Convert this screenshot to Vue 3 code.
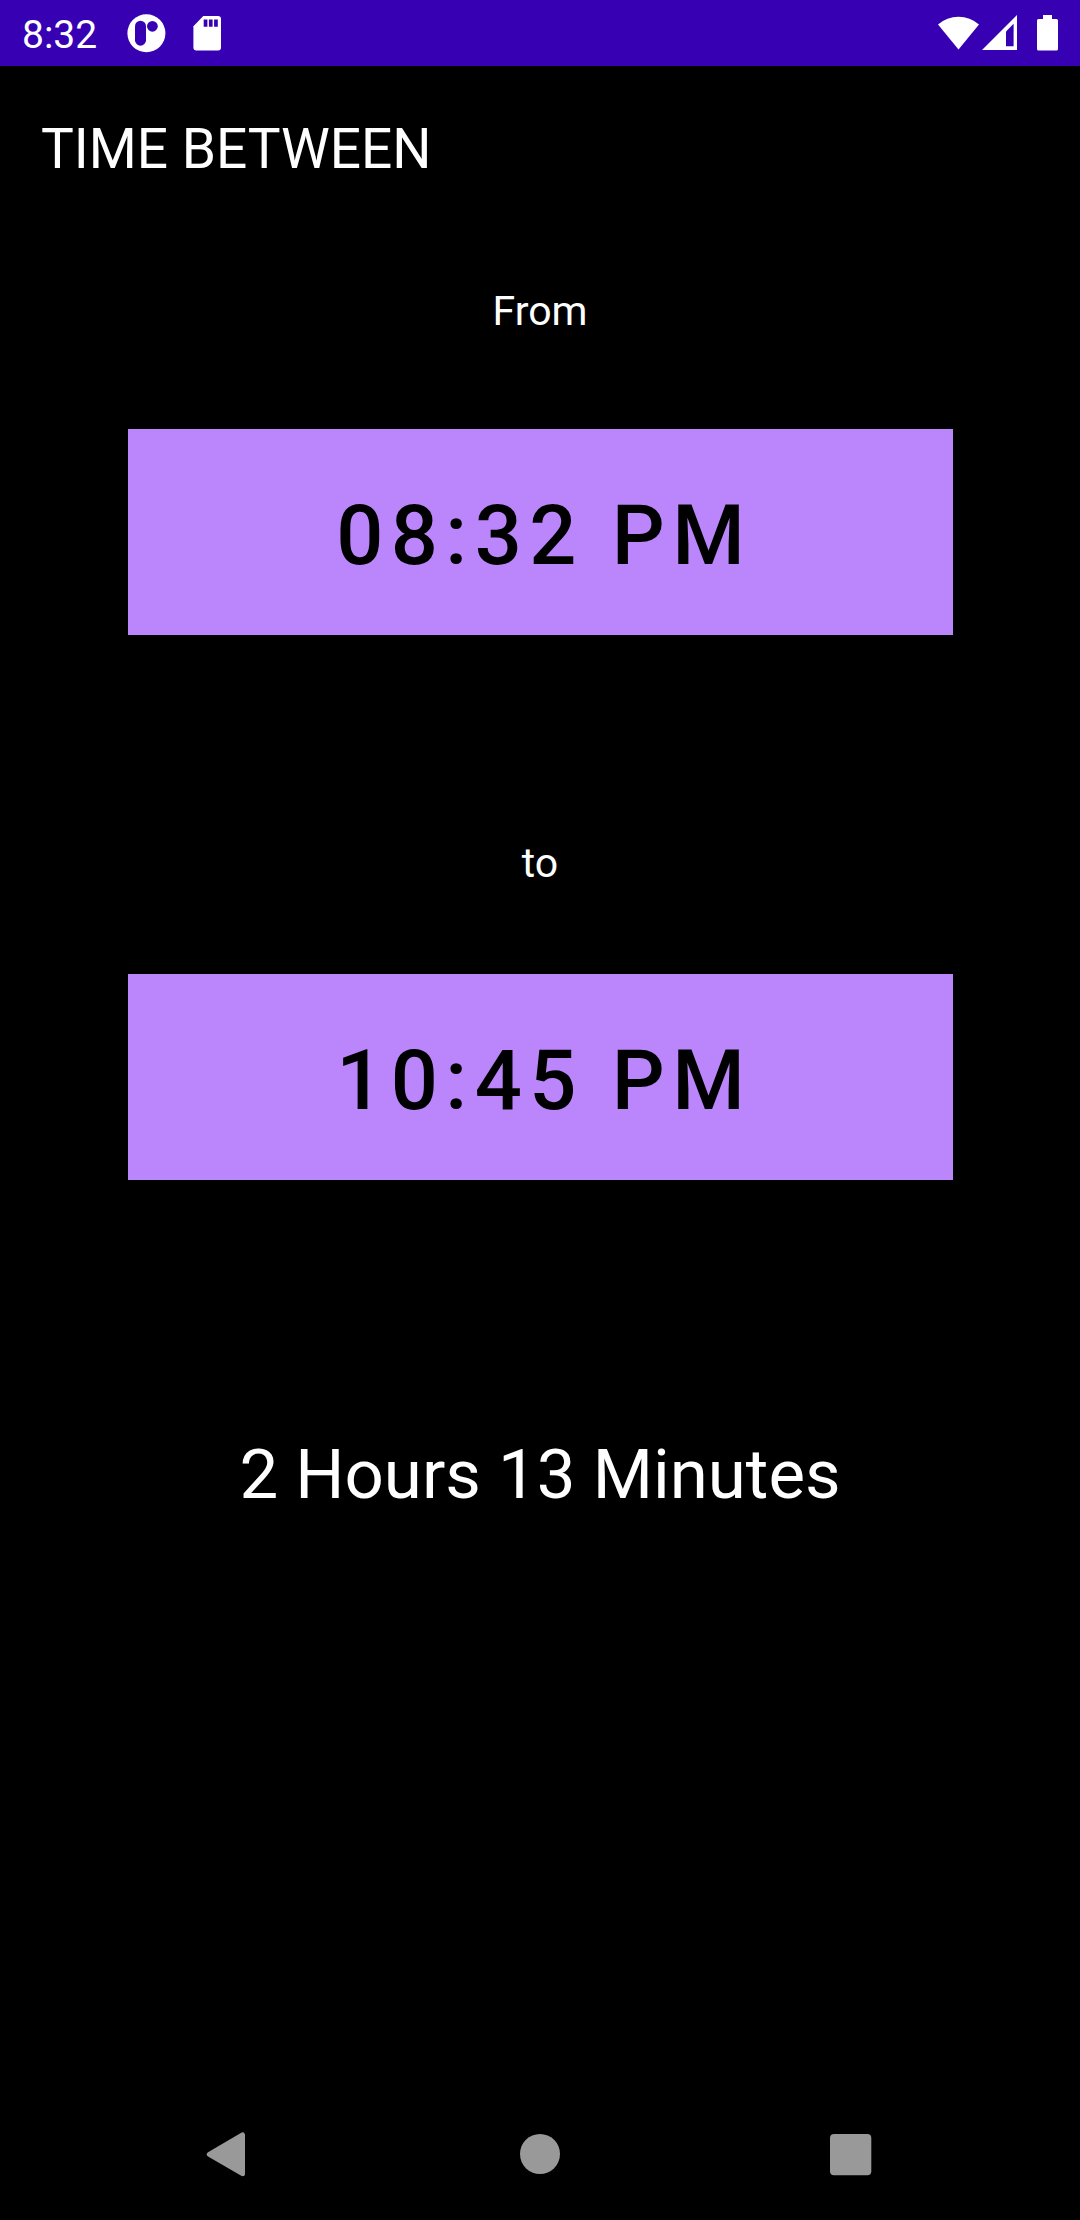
<script setup>
const pickers = [
  { label: 'From', time: '08:32 PM', cls: 'from' },
  { label: 'to', time: '10:45 PM', cls: 'to' },
]
</script>

<template>
  <div class="screen">
    <header class="status">
      <span class="clock">8:32</span>
      <svg width="50" height="66" viewBox="120 0 50 66">
        <circle cx="146.4" cy="33.2" r="19" fill="#fff" />
        <rect x="135" y="20.7" width="11" height="25" rx="5.5" fill="#3700b3" />
        <circle cx="152.4" cy="26.3" r="5.4" fill="#3700b3" />
      </svg>
      <svg width="60" height="66" viewBox="170 0 60 66">
        <path d="M203.3 16H218Q221 16 221 19V47.6Q221 50.6 218 50.6H196.4Q193.4 50.6 193.4 47.6V26.3Z" fill="#fff" />
        <path d="M203.7 19.5h3.7v7.2h-3.700zM208.900 19.5h3.700v7.2h-3.700zM214.100 19.5h3.700v7.2h-3.700z" fill="#3700b3" />
      </svg>
      <span class="grow"></span>
      <svg width="50" height="66" viewBox="930 0 50 66">
        <path d="M938 24.5A31 31 0 0 1 979 24.5L958.5 49.6Z" fill="#fff" />
      </svg>
      <svg width="50" height="66" viewBox="980 0 50 66">
        <path d="M1017 15V50H982Z" fill="#fff" />
        <path d="M1006 31.5L1013.6 23.8V46.2H1006Z" fill="#3700b3" />
      </svg>
      <svg width="50" height="66" viewBox="1030 0 50 66">
        <path d="M1043 15h9v4h4.500q1.500 0 1.500 1.500v28.600q0 1.500-1.500 1.500h-18q-1.500 0-1.500-1.500v-28.600q0-1.500 1.500-1.500h4.500z" fill="#fff" />
      </svg>
    </header>
    <h1>TIME BETWEEN</h1>
    <section v-for="p in pickers" :key="p.label" :class="p.cls">
      <p>{{ p.label }}</p>
      <button>{{ p.time }}</button>
    </section>
    <div class="result">2 Hours 13 Minutes</div>
    <nav>
      <svg viewBox="0 0 60 60"><path d="M43.500 10.900V49.700L10.300 30.300Z" fill="#999" stroke="#999" stroke-width="5" stroke-linejoin="round" /></svg>
      <svg viewBox="0 0 60 60"><circle cx="30" cy="30" r="20" fill="#999" /></svg>
      <svg viewBox="0 0 60 60"><rect x="9" y="10" width="41.300" height="41.300" rx="4" fill="#999" /></svg>
    </nav>
  </div>
</template>

<style scoped>
.screen { width: 1080px; height: 2220px; background: #000; color: #fff; font-family: Roboto, sans-serif; display: flex; flex-direction: column; }
.status { height: 66px; background: #3700b3; display: flex; align-items: center; flex: none; }
.status svg { flex: none; }
.clock { width: 120px; box-sizing: border-box; padding: 3px 0 0 22px; font-size: 39px; }
.grow { flex: 1; }
h1 { margin: 50px 0 0 41px; height: 66px; line-height: 66px; font-size: 55px; font-weight: 400; }
section { display: flex; flex-direction: column; align-items: center; }
p { margin: 0; font-size: 41px; line-height: 54px; height: 54px; }
button { width: 825px; height: 206px; border: 0; border-radius: 0; padding: 7px 0 0 7.4px; margin: 0 0 0 1px; background: #bb86fc; color: #000; font: 500 83px Roboto, sans-serif; letter-spacing: 7.41px; }
.from { margin-top: 102px; }
.from button { margin-top: 91px; }
.to { margin-top: 201px; }
.to button { margin-top: 84px; }
.result { margin-top: 250px; height: 90px; line-height: 90px; font-size: 69px; text-align: center; }
nav { margin-top: auto; height: 132px; display: flex; justify-content: center; align-items: center; gap: 251px; }
nav svg { width: 60px; height: 60px; }
</style>
